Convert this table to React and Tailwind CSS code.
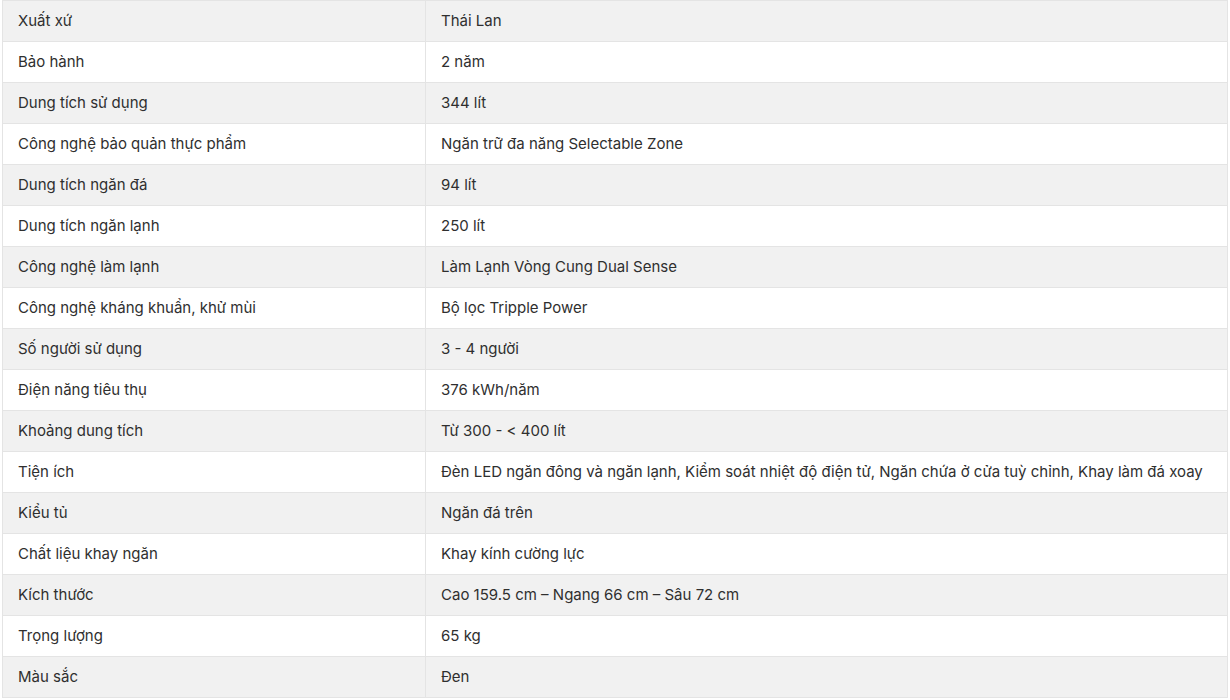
const specs = [
  ["Xuất xứ", "Thái Lan"],
  ["Bảo hành", "2 năm"],
  ["Dung tích sử dụng", "344 lít"],
  ["Công nghệ bảo quản thực phẩm", "Ngăn trữ đa năng Selectable Zone"],
  ["Dung tích ngăn đá", "94 lít"],
  ["Dung tích ngăn lạnh", "250 lít"],
  ["Công nghệ làm lạnh", "Làm Lạnh Vòng Cung Dual Sense"],
  ["Công nghệ kháng khuẩn, khử mùi", "Bộ lọc Tripple Power"],
  ["Số người sử dụng", "3 - 4 người"],
  ["Điện năng tiêu thụ", "376 kWh/năm"],
  ["Khoảng dung tích", "Từ 300 - < 400 lít"],
  ["Tiện ích", "Đèn LED ngăn đông và ngăn lạnh, Kiểm soát nhiệt độ điện tử, Ngăn chứa ở cửa tuỳ chỉnh, Khay làm đá xoay"],
  ["Kiểu tủ", "Ngăn đá trên"],
  ["Chất liệu khay ngăn", "Khay kính cường lực"],
  ["Kích thước", "Cao 159.5 cm – Ngang 66 cm – Sâu 72 cm"],
  ["Trọng lượng", "65 kg"],
  ["Màu sắc", "Đen"],
];

export default function App() {
  return (
    <div className="min-h-screen bg-white px-[2px] font-['Inter',sans-serif] text-[15px] text-[#2f2f2f]">
      <div className="border-x border-t border-[#e4e4e4]">
        {specs.map(([label, value], i) => (
          <div
            key={label}
            className={`flex h-[41px] border-b border-[#e4e4e4] ${i % 2 === 0 ? "bg-[#f1f1f1]" : "bg-white"}`}
          >
            <div className="flex w-[423px] shrink-0 items-center border-r border-[#e4e4e4] pl-[15px]">
              {label}
            </div>
            <div className="flex flex-1 items-center pl-[15px]">{value}</div>
          </div>
        ))}
      </div>
    </div>
  );
}
